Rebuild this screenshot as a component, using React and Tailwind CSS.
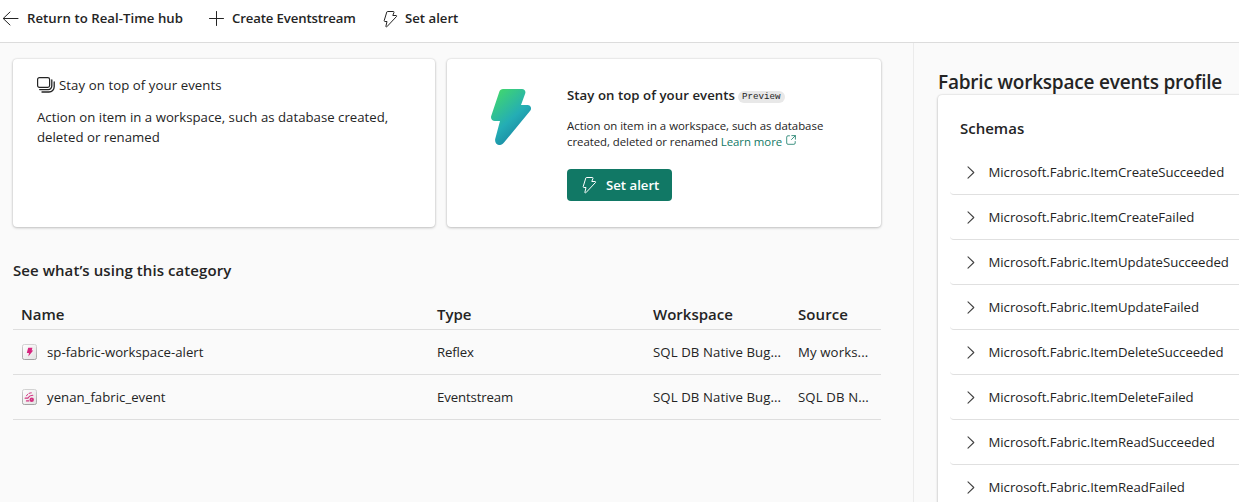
const BOLT =
  "M6.500 1.500h6c.4 0 .7.400.5.800L11.800 5.500h3.400c.5 0 .7.600.4.900L5.800 16.800c-.4.400-1 .100-.9-.5L6 11.500H3.900c-.5 0-.8-.5-.7-.9L5.800 2c.1-.3.300-.5.700-.5z";

function BoltIcon({ className }) {
  return (
    <svg className={className} width="18" height="18" viewBox="0 0 18 18" fill="none" stroke="currentColor" strokeLinejoin="round">
      <path d={BOLT} />
    </svg>
  );
}

function ArrowLeftIcon() {
  return (
    <svg className="shrink-0" width="18" height="18" viewBox="0 0 18 18" fill="none" stroke="currentColor" strokeLinecap="round" strokeLinejoin="round">
      <path d="M16 8.500H1.500M8 2L1.200 8.500l6.800 6.500" />
    </svg>
  );
}

function PlusIcon() {
  return (
    <svg className="shrink-0" width="16" height="16" viewBox="0 0 16 16" fill="none" stroke="currentColor" strokeLinecap="round">
      <path d="M8.500 .5v14M1.500 7.500h14" />
    </svg>
  );
}

function StackIcon() {
  return (
    <svg className="shrink-0" width="18" height="16" viewBox="0 0 18 16" fill="none" stroke="currentColor" strokeLinecap="round">
      <rect x="0.600" y="0.600" width="12" height="9.800" rx="1.800" strokeWidth="1.200" />
      <path d="M2.700 12.600h8.600a3.500 3.500 0 0 0 3.500-3.500V2.800" strokeWidth="1.300" />
      <path d="M5 15h7a5.200 5.200 0 0 0 5.200-5.200V5" strokeWidth="1.300" />
    </svg>
  );
}

function BigBolt() {
  return (
    <svg width="40" height="56" viewBox="0 0 40 56">
      <defs>
        <linearGradient id="bolt" x1="4" y1="2" x2="34" y2="36" gradientUnits="userSpaceOnUse">
          <stop offset="0" stopColor="#42d86c" />
          <stop offset="0.700" stopColor="#24adb5" />
          <stop offset="1" stopColor="#1c93a8" />
        </linearGradient>
      </defs>
      <path
        fill="url(#bolt)"
        d="M12 0h19c2.500 0 4 2.200 3.200 4.500L30 16h6.500c3.200 0 4.600 3.400 2.700 5.800L13 53.500C9 58.500 3.200 55.500 4.200 50L9 32H4c-2.800 0-4.600-2.500-3.800-5L8.400 2.600C8.900 1 10.300 0 12 0z"
      />
    </svg>
  );
}

function OpenIcon() {
  return (
    <svg className="mb-[6px] ml-1 inline" width="10" height="10" viewBox="0 0 10 10" fill="none" stroke="currentColor" strokeWidth="0.800" strokeLinecap="round" strokeLinejoin="round">
      <path d="M3.500.8H2A1.300 1.300 0 0 0 .7 2.100V8A1.300 1.300 0 0 0 2 9.300h5.900A1.300 1.300 0 0 0 9.200 8V6.500M5.800.6h3.600v3.600M9.200.8L5.500 4.500" />
    </svg>
  );
}

function ChevronIcon() {
  return (
    <svg className="shrink-0" width="8" height="14" viewBox="0 0 8 14" fill="none" stroke="#424242" strokeWidth="1.100" strokeLinecap="round" strokeLinejoin="round">
      <path d="M1 .8l5.800 5.700L1 12.200" />
    </svg>
  );
}

function Tile({ children }) {
  return (
    <svg className="shrink-0" width="16" height="16" viewBox="0 0 16 16">
      <defs>
        <linearGradient id="tile" x1="0" y1="0" x2="1" y2="1">
          <stop offset="0" stopColor="#ffffff" />
          <stop offset="1" stopColor="#e2e2e2" />
        </linearGradient>
        <linearGradient id="edge" x1="0" y1="0" x2="0" y2="1">
          <stop offset="0" stopColor="#d2d2d2" />
          <stop offset="1" stopColor="#a2a2a2" />
        </linearGradient>
      </defs>
      <rect x="1.500" y="0.500" width="14" height="15" rx="1.800" fill="url(#tile)" stroke="url(#edge)" />
      {children}
    </svg>
  );
}

function ReflexIcon() {
  return (
    <Tile>
      <path fill="#d6247e" d="M7.200 3.800h4.200L10.700 6.500h1.500L7.300 12.500l.7-3.500H5.800z" />
    </Tile>
  );
}

function EventstreamIcon() {
  return (
    <Tile>
      <g fill="none" stroke="#d3307f" strokeLinecap="round">
        <path d="M5.500 6.800C6.700 4.600 8.500 3.700 11.800 3.800" strokeWidth="1" strokeDasharray="2.200 1.600" />
        <path d="M7.300 8.600C8.200 7 9.300 6.400 11.800 6.300" strokeWidth="1.100" />
        <path d="M4.200 9.200h2.600M5.500 11.900h2.200" strokeWidth="1.300" />
        <circle cx="10.700" cy="10.700" r="1.300" strokeWidth="1.900" />
      </g>
    </Tile>
  );
}

const CARD = "rounded-[4px] bg-white shadow-[0_0_2px_rgba(0,0,0,0.16),0_1px_3px_rgba(0,0,0,0.20)]";
const GRID = "grid grid-cols-[416px_216px_145px_91px] border-b border-[#dedede] pl-2";

const rows = [
  { icon: <ReflexIcon />, name: "sp-fabric-workspace-alert", type: "Reflex", workspace: "SQL DB Native Bug...", source: "My works..." },
  { icon: <EventstreamIcon />, name: "yenan_fabric_event", type: "Eventstream", workspace: "SQL DB Native Bug...", source: "SQL DB N..." },
];

const schemas = [
  "ItemCreateSucceeded",
  "ItemCreateFailed",
  "ItemUpdateSucceeded",
  "ItemUpdateFailed",
  "ItemDeleteSucceeded",
  "ItemDeleteFailed",
  "ItemReadSucceeded",
  "ItemReadFailed",
];

export default function App() {
  return (
    <div className="flex h-[502px] w-[1239px] flex-col overflow-hidden bg-[#fafafa] font-['Open_Sans','Noto_Sans',sans-serif] text-[13.200px] whitespace-nowrap text-[#242424]">
      <header className="flex h-[43px] shrink-0 items-center border-b border-[#dcdcdc] bg-white pb-[4px] pl-[2px] font-semibold">
        <button className="flex w-[206px] items-center gap-[7px]">
          <ArrowLeftIcon />
          <span className="tracking-[0.040px]">Return to Real-Time hub</span>
        </button>
        <button className="flex w-[173px] items-center gap-2">
          <PlusIcon />
          <span className="tracking-[-0.140px]">Create Eventstream</span>
        </button>
        <button className="flex items-center gap-[6px]">
          <BoltIcon className="shrink-0" />
          <span>Set alert</span>
        </button>
      </header>

      <div className="flex min-h-0 flex-1">
        <main className="w-[914px] shrink-0 border-r border-[#ebebeb] pt-4 pl-[13px]">
          <div className="flex gap-3">
            <section className={`${CARD} h-[168px] w-[422px] pt-4 pl-6`}>
              <div className="flex h-5 items-center gap-1">
                <StackIcon />
                <span className="pt-[2px] tracking-[0.080px]">Stay on top of your events</span>
              </div>
              <p className="mt-3 leading-5 tracking-[0.020px]">
                Action on item in a workspace, such as database created,
                <br />
                deleted or renamed
              </p>
            </section>
            <section className={`${CARD} flex h-[168px] w-[434px] pl-11`}>
              <div className="w-[76px] pt-[30px]">
                <BigBolt />
              </div>
              <div className="pt-[26px]">
                <div className="flex h-5 items-center gap-[3px]">
                  <span className="pt-[2px] font-semibold tracking-[0.060px]">Stay on top of your events</span>
                  <span className="mt-[3px] flex h-3 items-center rounded-full bg-[#e8e8e8] px-1 font-['Liberation_Mono',monospace] text-[9.200px]">Preview</span>
                </div>
                <p className="mt-[13px] h-8 text-[11.400px] leading-4">
                  Action on item in a workspace, such as database
                  <br />
                  <span className="tracking-[-0.040px]">
                    created, deleted or renamed{" "}
                    <a className="text-[#117865]">
                      Learn more
                      <OpenIcon />
                    </a>
                  </span>
                </p>
                <button className="mt-[19px] flex h-8 w-[105px] items-center gap-2 rounded-[4px] bg-[#117865] pl-[13px] font-semibold text-white">
                  <BoltIcon className="shrink-0" />
                  <span className="pt-px">Set alert</span>
                </button>
              </div>
            </section>
          </div>

          <h2 className="mt-8 text-[15px] leading-[22px] font-semibold tracking-[0.070px]">See what’s using this category</h2>
          <div className="mt-[18px] w-[868px]">
            <div className={`${GRID} h-[31px] items-center text-[15px] font-semibold`}>
              <span>Name</span>
              <span>Type</span>
              <span>Workspace</span>
              <span className="tracking-[0.100px]">Source</span>
            </div>
            {rows.map((r) => (
              <div key={r.name} className={`${GRID} h-[45px] items-center pt-px`}>
                <span className="flex items-center gap-[10px]">
                  {r.icon}
                  <span className="tracking-[0.020px]">{r.name}</span>
                </span>
                <span className="tracking-[-0.120px]">{r.type}</span>
                <span className="tracking-[0.100px]">{r.workspace}</span>
                <span className="tracking-[0.120px]">{r.source}</span>
              </div>
            ))}
          </div>
        </main>

        <aside className="min-w-0 flex-1 pt-[25px] pl-6">
          <h1 className="h-[27px] text-[19px] leading-7 font-semibold tracking-[-0.200px]">Fabric workspace events profile</h1>
          <section className={`${CARD} h-[440px] w-[340px] pt-[22px] pl-3`}>
            <h3 className="mb-[11px] pl-[10px] text-[15px] leading-[22px] font-semibold">Schemas</h3>
            {schemas.map((s) => (
              <div key={s} className="flex h-[45px] items-center gap-[13.500px] rounded-[4px] border-b border-[#e0e0e0] pt-px pl-[17px]">
                <ChevronIcon />
                <span className="tracking-[-0.040px]">Microsoft.Fabric.{s}</span>
              </div>
            ))}
          </section>
        </aside>
      </div>
    </div>
  );
}
